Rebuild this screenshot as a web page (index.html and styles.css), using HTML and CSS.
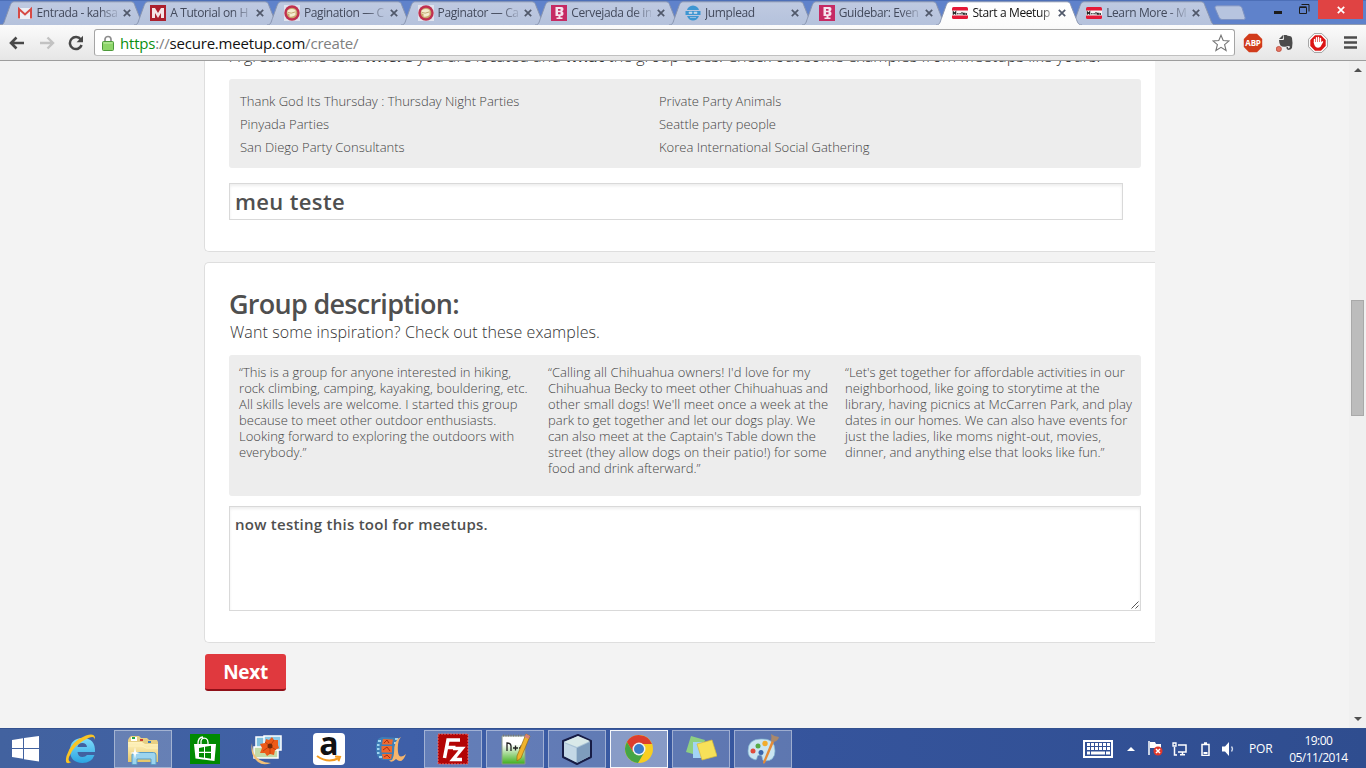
FILE: index.html
```
<!DOCTYPE html>
<html lang="en">
<head>
<meta charset="utf-8">
<title>Start a Meetup</title>
<link rel="stylesheet" href="styles.css">
</head>
<body>
<svg class="defs" width="0" height="0">
  <defs>
    <linearGradient id="tabfill" x1="0" y1="0" x2="0" y2="1"><stop offset="0" stop-color="#bfcae1"/><stop offset="1" stop-color="#b5c2dc"/></linearGradient>
    <linearGradient id="activefill" x1="0" y1="0" x2="0" y2="1"><stop offset="0" stop-color="#ffffff"/><stop offset="1" stop-color="#fbfbfb"/></linearGradient>
    <linearGradient id="folder" x1="0" y1="0" x2="0" y2="1"><stop offset="0" stop-color="#fff3bf"/><stop offset="1" stop-color="#e6c568"/></linearGradient>
    <linearGradient id="npp" x1="0" y1="0" x2="0" y2="1"><stop offset=".3" stop-color="#ffffff"/><stop offset="1" stop-color="#3fae1c"/></linearGradient>
    <linearGradient id="ie" x1="0" y1="0" x2="0" y2="1"><stop offset="0" stop-color="#7fdcfb"/><stop offset="1" stop-color="#2ba5e2"/></linearGradient>
    <symbol id="tab" viewBox="0 0 146 25" preserveAspectRatio="none"><path d="M0 25C4 25 4 22 5.500 18L10 5C11.500 1.500 12 .8 15 .8H130C133 .8 134 1.500 135 5L140 18C141.500 22 142 25 146 25" stroke="#8793ae" stroke-width="1"/></symbol>
    <symbol id="close" viewBox="0 0 8 8"><path d="M.8.8l6.400 6.400M7.200.8L.8 7.200" stroke="#50586a" stroke-width="1.700"/></symbol>
    <symbol id="cake" viewBox="0 0 16 16"><path fill="#dfe3ee" d="M0 0h16v16H0z"/><circle cx="8" cy="8" r="7.700" fill="#c0304f"/><circle cx="8" cy="8" r="5.300" fill="#c9a66b"/><path d="M3.500 5.500q4-2.500 8-.5v5q-3 2.500-6 1.500V9l-2-.5z" fill="#f4edcf"/><path d="M4 7.500q3 1.500 7-.5" fill="none" stroke="#b8975a" stroke-width=".8"/></symbol>
    <symbol id="beer" viewBox="0 0 16 16"><path fill="#c62a63" d="M0 0h16v16H0z"/><path d="M4.500 2h6q2 0 2 2t-1.500 2.200q1.500.5 1.500 2.300 0 2.500-2.500 2.500H9.500v1.500h2V14h-6v-1.500h2V11h-3z" fill="#f6e3ee"/><path d="M7 4h2.500v1.700H7zM7 7.300h2.500v2H7z" fill="#c62a63"/></symbol>
    <symbol id="meet" viewBox="0 0 16 12"><rect width="16" height="12" rx="1.500" fill="#e51937"/><path fill="#f5f5f5" d="M0 3.500h16v5H0z"/><path d="M1.300 7.700V4.800l1.200 1.500 1.200-1.500v2.900M5 6.800h1.600M7.300 6.800h1.600M10 5v2.500M11.500 5.800v1.500h1.300V5.800M14.300 8V6" fill="none" stroke="#222" stroke-width="1.100"/></symbol>
  </defs>
</svg>

<header class="tabs">
  <div class="tab"><svg class="shape"><use href="#tab"/></svg><svg class="fav" viewBox="0 0 16 16"><path d="M1 3h14v11H1z" fill="#eceff5"/><path d="M2 13.500V4l6 5.500L14 4v9.500" fill="none" stroke="#d64a45" stroke-width="2"/></svg><span class="title">Entrada - kahsa</span><svg class="x"><use href="#close"/></svg></div>
  <div class="tab"><svg class="shape"><use href="#tab"/></svg><svg class="fav" viewBox="0 0 16 16"><path fill="#ac1f2d" d="M0 0h16v16H0z"/><path d="M2 13V3h3l3 5 3-5h3v10h-3V8l-3 5-3-5v5z" fill="#f4e4e6"/></svg><span class="title">A Tutorial on H</span><svg class="x"><use href="#close"/></svg></div>
  <div class="tab"><svg class="shape"><use href="#tab"/></svg><svg class="fav"><use href="#cake"/></svg><span class="title">Pagination — C</span><svg class="x"><use href="#close"/></svg></div>
  <div class="tab"><svg class="shape"><use href="#tab"/></svg><svg class="fav"><use href="#cake"/></svg><span class="title">Paginator — Ca</span><svg class="x"><use href="#close"/></svg></div>
  <div class="tab"><svg class="shape"><use href="#tab"/></svg><svg class="fav"><use href="#beer"/></svg><span class="title">Cervejada de in</span><svg class="x"><use href="#close"/></svg></div>
  <div class="tab"><svg class="shape"><use href="#tab"/></svg><svg class="fav" viewBox="0 0 16 16"><path d="M2 5q1-4 6-4.500Q13 1 14 5zM.5 6h15v4H.5zM2 11h12q-2 4.500-6 4.500T2 11z" fill="#3d96d2"/><path d="M4 7h3v1.500H4zm5 0h3v1.500H9zM5 12.500h6" fill="#c5d8ea" stroke="#c5d8ea" stroke-width=".6"/></svg><span class="title">Jumplead</span><svg class="x"><use href="#close"/></svg></div>
  <div class="tab"><svg class="shape"><use href="#tab"/></svg><svg class="fav"><use href="#beer"/></svg><span class="title">Guidebar: Even</span><svg class="x"><use href="#close"/></svg></div>
  <div class="tab active"><svg class="shape"><use href="#tab"/></svg><svg class="fav"><use href="#meet"/></svg><span class="title">Start a Meetup</span><svg class="x"><use href="#close"/></svg></div>
  <div class="tab"><svg class="shape"><use href="#tab"/></svg><svg class="fav"><use href="#meet"/></svg><span class="title">Learn More - M</span><svg class="x"><use href="#close"/></svg></div>
  <svg class="newtab" viewBox="0 0 32 16"><path d="M3 .8h22q2 0 3 2l3 9.500q.8 2.200-1.500 2.200H8q-2 0-3-2.200L1 3Q.5.8 3 .8z" fill="#b7c4df" stroke="#7f93c2"/></svg>
  <div class="wincontrols">
    <svg class="min" viewBox="0 0 8 3"><path d="M0 0h8v3H0z" fill="#1c1c1c"/></svg>
    <svg class="restore" viewBox="0 0 11 11"><path d="M.5 3.500h7v6h-7zM.5 2.800h7M2.500 .5h7.500v7" fill="none" stroke="#1c1c1c"/></svg>
    <div class="winclose"><svg viewBox="0 0 8 8"><path d="M.8.8l6.400 6.400M7.200.8L.8 7.200" stroke="#fff" stroke-width="1.700"/></svg></div>
  </div>
</header>

<nav class="toolbar">
  <svg class="back" viewBox="0 0 16 14"><path d="M15 7H3M7.500 1.500L2 7l5.500 5.500" fill="none" stroke="#484848" stroke-width="2.600"/></svg>
  <svg class="fwd" viewBox="0 0 16 14"><path d="M1 7h12M8.500 1.500L14 7l-5.500 5.500" fill="none" stroke="#c2c2c2" stroke-width="2.400"/></svg>
  <svg class="reload" viewBox="0 0 16 16"><path d="M12.800 4.600A6 6 0 1 0 13.600 10" fill="none" stroke="#484848" stroke-width="2.500"/><path d="M15 .8v6.400H8.600z" fill="#484848"/></svg>
  <div class="omnibox">
    <svg class="lock" viewBox="0 0 12 16"><path d="M3 8V4.500a3 3 0 0 1 6 0V8" fill="none" stroke="#8d8d8d" stroke-width="1.700"/><rect x=".5" y="6.500" width="11" height="9" rx="1" fill="#8dd569" stroke="#4d9a3b"/><path d="M1.500 8h9" stroke="#c5f0ae"/></svg>
    <span class="url"><span class="scheme">https</span><span class="dim">://</span>secure.meetup.com<span class="dim">/create/</span></span>
    <svg class="star" viewBox="0 0 18 18"><path d="M9 1.200l2.200 5.300 5.900.4-4.500 3.800 1.500 5.800L9 13.300l-5.100 3.200 1.500-5.800L.9 6.900l5.900-.4z" fill="#fff" stroke="#757575" stroke-width="1.100"/></svg>
  </div>
  <div class="exts">
    <div class="abp"><svg viewBox="0 0 20 20"><path d="M6 .8h8L19.200 6v8L14 19.200H6L.8 14V6z" fill="#d13b1b"/></svg><span>ABP</span></div>
    <svg class="evernote" viewBox="0 0 18 18"><path d="M3 5l4-4v3q0 1-1 1zM7.500 1h3q1 1 3 1t2.500 2q1 5 0 10-1 2-4 2-2-1-1.500-3h1.500v1.500q2 0 2-2-2-1-3.500 0-4 1-6-1Q3 9 3 6h4q1 0 1-1z" fill="#4b4b4b"/><circle cx="2.800" cy="15" r="2.600" fill="#e67563" stroke="#b3402f" stroke-width=".7"/></svg>
    <svg class="adblock" viewBox="0 0 20 20"><path d="M6.200.6h7.600l5.600 5.600v7.600l-5.600 5.600H6.200L.6 13.800V6.200z" fill="#fff" stroke="#888" stroke-width=".8"/><path d="M7 2.300h6L17.700 7v6L13 17.700H7L2.300 13V7z" fill="#dc1414"/><path d="M6.500 10V6.500M8.500 9V4.700M10.500 9V4.500M12.500 9.500V5.500" stroke="#fff" stroke-width="1.400" stroke-linecap="round"/><path d="M5.800 9h7.400l1.300-1 .8.800-2.800 5q-2.500 2-5 0Q6 12 5.800 9z" fill="#fff"/></svg>
    <svg class="menu" viewBox="0 0 13 13"><path d="M0 1.500h13M0 6.500h13M0 11.500h13" stroke="#4c4c4c" stroke-width="2.600"/></svg>
  </div>
</nav>

<div class="viewport">
  <main class="page">
    <section class="card first">
      <p class="intro">A great name tells <b>where</b> you are located and <b>what</b> the group does. Check out some examples from Meetups like yours.</p>
      <ul class="names">
        <li>Thank God Its Thursday : Thursday Night Parties</li><li>Private Party Animals</li>
        <li>Pinyada Parties</li><li>Seattle party people</li>
        <li>San Diego Party Consultants</li><li>Korea International Social Gathering</li>
      </ul>
      <div class="field name">meu teste</div>
    </section>
    <section class="card second">
      <h2>Group description:</h2>
      <p class="sub">Want some inspiration? Check out these examples.</p>
      <div class="quotes">
        <p>“This is a group for anyone interested in hiking,<br><span class="wide">rock climbing, camping, kayaking, bouldering, etc.</span><br><span class="wide">All skills levels are welcome. I started this group</span><br>because to meet other outdoor enthusiasts.<br>Looking forward to exploring the outdoors with<br>everybody.”</p>
        <p><span class="wide">“Calling all Chihuahua owners! I'd love for my</span><br><span class="tight">Chihuahua Becky to meet other Chihuahuas and</span><br><span class="wide">other small dogs! We'll meet once a week at the</span><br>park to get together and let our dogs play. We<br>can also meet at the Captain's Table down the<br><span class="wide">street (they allow dogs on their patio!) for some</span><br>food and drink afterward.”</p>
        <p>“Let's get together for affordable activities in our<br>neighborhood, like going to storytime at the<br><span class="wide">library, having picnics at McCarren Park, and play</span><br>dates in our homes. We can also have events for<br><span class="wide">just the ladies, like moms night-out, movies,</span><br>dinner, and anything else that looks like fun.”</p>
      </div>
      <div class="field desc">now testing this tool for meetups.<svg class="grip" viewBox="0 0 8 8"><path d="M.5 7.500l7-7M4.500 7.500l3-3" stroke="#555" stroke-width="1"/></svg></div>
    </section>
    <div class="next">Next</div>
  </main>
  <aside class="scrollbar">
    <svg viewBox="0 0 8 4"><path d="M4 0l4 4H0z" fill="#505050"/></svg>
    <div class="thumb"></div>
    <svg viewBox="0 0 8 4"><path d="M4 4l4-4H0z" fill="#505050"/></svg>
  </aside>
</div>

<footer class="taskbar">
  <div class="start"><svg width="27" height="26" viewBox="0 0 27 26"><path d="M0 4l11-1.800V12H0zM12 2l15-2v12H12zM0 13h11v9.800L0 21zM12 13h15v12.500L12 23.300z" fill="#fff"/></svg></div>
  <div class="app"><svg width="32" height="32" viewBox="0 0 32 32"><path d="M30 19H12.500q.5 5 5 5 3 0 4.500-2h7.500q-3 8-12 8Q5 29.500 5 17.500T17.500 5Q30.500 5 30 19zm-8-5q-.5-4-4.700-4t-4.800 4z" fill="url(#ie)" fill-rule="evenodd"/><path d="M6.500 29Q-1 33 1.500 23 6 8 21 2.500q8-3 9 2L29.500 8q1-6-6-3Q9 11 4 24q-1.500 5.500 2.500 5z" fill="#f9c425"/></svg></div>
  <div class="app open"><svg width="34" height="32" viewBox="0 0 34 32"><path d="M3 5l2-2h8l2 2h6l2 2h8l1 2v19H2V7z" fill="#e7cf83"/><path d="M5 4h6v4H5z" fill="#fff"/><path d="M6 4h3v2H6z" fill="#24a343"/><path d="M14 6h3v2h-3z" fill="#cf3c30"/><path d="M22 8h3v2h-3z" fill="#3677bd"/><path d="M2 9h14l3 2h13v18H2z" fill="url(#folder)"/><path d="M2 13h14l4 2h12" fill="none" stroke="#fff3bd"/><path d="M6 31.500V22q0-2.500 2.500-2.500h19Q30 19.500 30 22v9.500h-5V26H11v5.500z" fill="#9cd4ee" stroke="#5b9dc5"/><path d="M9 14l1 5 4 1-4 1-1 5-1-5-4-1 4-1z" fill="#fff"/></svg></div>
  <div class="app"><svg width="30" height="30" viewBox="0 0 30 30"><path fill="#008a00" d="M0 0h30v30H0z"/><path d="M11 10V7q1-4 5-2.500 2 1 2 4V10M8 10q0-7 5-7" fill="none" stroke="#fff" stroke-width="1.300"/><path d="M4 10h22l-1.500 17-19-2.500z" fill="#fff"/><path d="M9 14l5-1v4.800H9zm6-1.200l6-1v6h-6zM9 19h5v4.700L9 23zm6 0h6v5.800l-6-1z" fill="#008a00"/></svg></div>
  <div class="app"><svg width="32" height="32" viewBox="0 0 32 32"><path d="M5 4h17v20H5z" fill="#7fc1df" stroke="#fff" stroke-width="1.500"/><path d="M3 14h24v11H3z" fill="#c3dba9" stroke="#fff" stroke-width="1.500"/><path d="M13 3h17v14H13z" fill="#8bc9e6" stroke="#fff" stroke-width="1.500"/><path d="M15 6l3 1 3-3 2 3 4 0v5l1 3-4 2-1 5-4-1-3 2-2-3-5 0 2-5-2-4 5-1z" fill="#ec5b19"/><path d="M14 9l5 4 4-6M12 18l7-5 6 4m-6-4v8" stroke="#c43f0e" fill="none"/><circle cx="19" cy="13" r="2.500" fill="#712a0c"/><path d="M1 10q0 19 19 20-10 4-16-4Q-1 19 1 10z" fill="#f2c078"/></svg></div>
  <div class="app"><div class="amazon"><span>a</span><svg width="28" height="8" viewBox="0 0 28 8"><path d="M2 1q11 8 22 2M20 1.500l5 .3-1.500 4.500" fill="none" stroke="#f39a1f" stroke-width="2"/></svg></div></div>
  <div class="app"><svg width="32" height="28" viewBox="0 0 32 28"><path d="M2 6q1-3 5-4l17 1-3 5v10q-1 5-4 7H8q-5-1-6-5-2-7 0-14z" fill="#3f7fb7"/><path d="M8 4l10 .5-1 5H7zM6.500 11H17v6.500H6.500zM7 19h10l-1 5H8z" fill="#f0692d"/><path d="M9 8l3-3 2 3M8 15l4-3 3 4M9 22l3-2 3 3" stroke="#a72c10" fill="none"/><path d="M3 6h3M2 10h2.500M2 14h2.500M2 18h2.500M4 22h3M20 4h3M19 8h2" stroke="#9fd4f0" stroke-width="1.800"/><path d="M21 24q-5 5-7 1 4 2 5-7Q19 4 26 2q-4 4-3 15 1 8 8 2-4 11-10 5z" fill="#f5b56d"/></svg></div>
  <div class="app open"><svg width="32" height="32" viewBox="0 0 32 32"><path d="M1 1h30v30H1z" fill="#b30505" stroke="#e17373" stroke-dasharray="2 1"/><path d="M7.500 25L11 7h12M9.500 14.500h9M16 15.500h9l-9 11h9" fill="none" stroke="#fff" stroke-width="3.500"/></svg></div>
  <div class="app open"><svg width="32" height="32" viewBox="0 0 32 32"><path d="M3 3h23v28H3z" fill="url(#npp)" stroke="#8a9a8a"/><path d="M4 2.500h20" stroke="#777" stroke-width="2" stroke-dasharray="1 1.500"/><path d="M8 18V10q4 0 4 3v5M14 15h5m-2.500-2.500v5M20 15h4m-2-2.500v5" fill="none" stroke="#222" stroke-width="1.300"/><path d="M27 1l4 2-9 22-4 3v-5z" fill="#efb42c" stroke="#9b6a10" stroke-width=".7"/><path d="M27 1l4 2-1.500 3-4-2z" fill="#d98078"/></svg></div>
  <div class="app open"><svg width="32" height="32" viewBox="0 0 32 32"><path d="M2 8L17 2l13 6v16l-14 7L2 24z" fill="#a9c3d6" stroke="#171c45" stroke-width="2" stroke-linejoin="round"/><path d="M3 9l14-6 12 5-13 6z" fill="#d9e9e9"/><path d="M3 10l12 5v14L3 23z" fill="#c4d8e6"/><path d="M16 15l13-6v14l-13 7z" fill="#7e9dbd"/></svg></div>
  <div class="app open current"><svg width="30" height="30" viewBox="0 0 30 30"><circle cx="15" cy="15" r="14" fill="#f8ce21"/><path d="M2.900 8A14 14 0 0 1 28 10H15L9 18z" fill="#dc3d2d"/><path d="M2.900 8A14 14 0 0 0 14 29L20.500 18 9 18z" fill="#45a545"/><circle cx="15" cy="15" r="6.500" fill="#f0f3f5"/><circle cx="15" cy="15" r="5" fill="#3b7cc9"/></svg></div>
  <div class="app open"><svg width="32" height="30" viewBox="0 0 32 30"><path d="M6 2l14 4-5 16L1 18z" fill="#8ed082"/><path d="M8 8h13v16H8z" fill="#a3d4f5"/><path d="M12 10l15-4 5 16-15 4z" fill="#f7e159" stroke="#d6b83b" stroke-width=".7"/></svg></div>
  <div class="app open"><svg width="32" height="32" viewBox="0 0 32 32"><path d="M1 18Q1 6 14 6q14-1 14 12 0 10-10 10-3 0-3-4 0-2-2-2-3 0-3 3t-4 1Q1 24 1 18z" fill="#cbe5f1" stroke="#7fb3d0" stroke-width=".7"/><circle cx="6" cy="18" r="2.500" fill="#e04b3b"/><circle cx="11" cy="13" r="2.500" fill="#55aa45"/><circle cx="18" cy="10.500" r="2.700" fill="#f2ac2c"/><circle cx="14" cy="19.500" r="2.500" fill="#3b66ac"/><path d="M25 7l2 2-9 21q-2 2-2-1z" fill="#e58b36"/><path d="M24 1q4 3 8 3-1 4-5 5l-3-1q1-4 0-7z" fill="#a9886b"/></svg></div>
  <div class="tray">
    <svg class="kbd" viewBox="0 0 30 18"><rect x="1" y="1" width="28" height="16" fill="none" stroke="#fff" stroke-width="2"/><path d="M4 4.500h23M4 8.500h23" stroke="#fff" stroke-width="3" stroke-dasharray="3 1"/><path d="M4 13h3m1 0h14m1 0h4" stroke="#fff" stroke-width="3"/></svg>
    <svg class="up" viewBox="0 0 8 4"><path d="M4 0l4 4H0z" fill="#fff"/></svg>
    <svg class="flag" viewBox="0 0 16 15"><path d="M2 0v14" stroke="#fff" stroke-width="1.500"/><path d="M3 1h5l1 2h5v6H9L8 7H3z" fill="#fff"/><circle cx="11" cy="10" r="4.500" fill="#e2382a"/><path d="M9 8l4 4m0-4l-4 4" stroke="#fff" stroke-width="1.500"/></svg>
    <svg class="net" viewBox="0 0 15 14"><path d="M6 3h8v7H6M8 12.800h5M10.500 10v3M2.500 5v8H5" fill="none" stroke="#fff" stroke-width="1.500"/><path d="M1 1h3v3H1z" fill="none" stroke="#fff" stroke-width="1.300"/></svg>
    <svg class="bat" viewBox="0 0 9 14"><path d="M1 2.500h7v11H1zM3 1h3" fill="none" stroke="#fff" stroke-width="1.500"/><path d="M2.500 10h4v2h-4z" fill="#fff"/></svg>
    <svg class="vol" viewBox="0 0 13 14"><path d="M0 4.500h3L7 0v14L3 9.500H0z" fill="#fff"/><path d="M9.500 4.500q2 2.500 0 5" fill="none" stroke="#cfd8ea" stroke-width="1.300"/></svg>
    <span class="lang">POR</span>
    <div class="clock"><span>19:00</span><span>05/11/2014</span></div>
  </div>
</footer>
</body>
</html>
```

FILE: styles.css
```
* { box-sizing: border-box; }
body { margin: 0; width: 1366px; height: 768px; overflow: hidden; display: flex; flex-direction: column; background: #f3f3f3; font-family: "Open Sans", "Noto Sans", sans-serif; color: #4f4f4f; }
.defs { position: absolute; }
svg { display: block; flex: none; }
p, h2, ul { margin: 0; padding: 0; }

.tabs { height: 24px; display: flex; background: #5f82cb; border-top: 1px solid #4d6fb7; flex: none; position: relative; z-index: 2; }
.tab { width: 146px; height: 24px; margin-right: -12.3px; padding: 0 15px 0 16.500px; display: flex; align-items: center; flex: none; position: relative; font-size: 12px; color: #434a5c; }
.tab .shape { position: absolute; left: 0; top: 0; width: 146px; height: 24px; fill: url(#tabfill); }
.tab.active { z-index: 1; color: #111; }
.tab.active .shape { fill: url(#activefill); }
.fav { width: 16px; height: 16px; position: relative; }
.title { position: relative; margin-left: 4px; width: 80px; height: 17px; line-height: 16px; white-space: nowrap; overflow: hidden; letter-spacing: -.38px; mask-image: linear-gradient(90deg, #000 78%, rgba(0, 0, 0, .2) 100%); }
.tab.active .title { mask-image: linear-gradient(90deg, #000 85%, rgba(0, 0, 0, .3) 100%); }
.x { width: 8px; height: 8px; margin-left: 6px; position: relative; }
.newtab { width: 32px; height: 16px; margin: 4px 0 0 11px; }
.wincontrols { margin-left: auto; margin-right: 3px; display: flex; }
.min { width: 8px; height: 3px; margin: 10px 17px 0 0; }
.restore { width: 11px; height: 11px; margin: 3px 8px 0 0; }
.winclose { width: 45px; height: 19px; margin-top: -1px; background: #e04343; display: flex; align-items: center; justify-content: center; }
.winclose svg { width: 8px; height: 8px; }

.toolbar { height: 37px; flex: none; display: flex; align-items: center; background: linear-gradient(#fbfbfb, #e6e6e6); border-bottom: 1px solid #9d9d9d; border-top: 1px solid #8f9bb2; padding-left: 9px; }
.back { width: 16px; height: 14px; }
.fwd { width: 16px; height: 14px; margin-left: 14px; }
.reload { width: 16px; height: 16px; margin-left: 13px; }
.omnibox { margin-left: 10px; width: 1141px; height: 27px; background: #fff; border: 1px solid #a5a5a5; border-bottom-color: #c0c0c0; border-radius: 3px; display: flex; align-items: center; padding: 0 4px 0 7px; }
.lock { width: 12px; height: 16px; }
.url { margin-left: 6px; font-size: 15px; letter-spacing: -.2px; color: #111; white-space: nowrap; flex: none; }
.scheme { color: #0a8f10; }
.dim { color: #808080; }
.star { width: 18px; height: 18px; margin-left: auto; }
.exts { display: flex; align-items: center; }
.abp { width: 20px; height: 20px; margin-left: 8px; position: relative; display: flex; align-items: center; justify-content: center; }
.abp svg { position: absolute; width: 20px; height: 20px; }
.abp span { position: relative; color: #fff; font: bold 8px "Open Sans", sans-serif; letter-spacing: -.2px; }
.evernote { width: 18px; height: 18px; margin-left: 13px; }
.adblock { width: 20px; height: 20px; margin-left: 14px; }
.menu { width: 13px; height: 13px; margin-left: 16px; }

.viewport { flex: 1; display: flex; overflow: hidden; }
.page { flex: 1; padding-left: 204px; overflow: hidden; display: flex; flex-direction: column; align-items: flex-start; }
.card { width: 951px; background: #fff; border: 1px solid #dedede; border-right: 0; border-radius: 5px 0 0 5px; padding-left: 24px; flex: none; }
.first { height: 207px; margin-top: -16px; }
.intro { font-size: 16px; line-height: 20px; font-weight: 330; letter-spacing: .06px; white-space: nowrap; color: #333; padding-left: 1px; }
.intro b { font-weight: 600; }
.names { list-style: none; width: 912px; height: 89px; margin-top: 13px; padding: 11px 0 0 11px; background: #ededed; border-radius: 3px; display: grid; grid-template-columns: 419px 1fr; grid-auto-rows: 23px; font-size: 13px; line-height: 23px; font-weight: 330; color: #444; }
.field { border: 1px solid #d9d9d9; background: #fff; box-shadow: inset 0 2px 3px rgba(0, 0, 0, .07); padding-left: 5px; font-weight: 600; }
.name { width: 894px; height: 37px; margin-top: 15px; font-size: 22px; line-height: 35px; letter-spacing: .35px; }
.second { height: 381px; margin-top: 10px; padding-top: 23px; }
h2 { font-size: 27px; line-height: 36px; font-weight: 600; letter-spacing: -.72px; }
.sub { font-size: 16px; line-height: 20px; font-weight: 330; letter-spacing: .1px; color: #333; padding-left: 1px; }
.quotes { width: 912px; height: 141px; margin-top: 13px; padding: 9px 0 0 10px; background: #ededed; border-radius: 3px; display: grid; grid-template-columns: 309px 297px 1fr; font-size: 13px; line-height: 16px; font-weight: 330; white-space: nowrap; color: #444; }
.wide { letter-spacing: .07px; }
.tight { letter-spacing: -.06px; }
.desc { width: 912px; height: 105px; margin-top: 10px; padding-top: 7px; font-size: 15px; line-height: 20px; letter-spacing: .25px; position: relative; }
.grip { position: absolute; right: 1px; bottom: 1px; width: 8px; height: 8px; }
.next { margin: 11px 0 0 1px; width: 81px; height: 37px; background: #e0393e; border-bottom: 2px solid #8f1018; border-radius: 3px; color: #fff; font-size: 19px; font-weight: 700; line-height: 36px; text-align: center; letter-spacing: -.3px; }
.scrollbar { width: 17px; background: #f0f0f0; display: flex; flex-direction: column; align-items: center; padding: 7px 0; }
.scrollbar svg { width: 8px; height: 4px; }
.thumb { width: 13px; height: 116px; margin: 228px 0 auto 0; background: #bcbcbc; border: 1px solid #a9a9a9; }

.taskbar { height: 40px; flex: none; display: flex; align-items: center; gap: 4px; background: linear-gradient(90deg, #42629f, #3e5fa8 30%, #35549c 60%, #2f4d8f); border-top: 1px solid #33518f; color: #fff; }
.start { width: 48px; padding-left: 12px; }
.app { width: 58px; height: 38px; display: flex; align-items: center; justify-content: center; flex: none; }
.open { background: rgba(255, 255, 255, .2); border: 1px solid rgba(255, 255, 255, .4); }
.current { background: rgba(255, 255, 255, .4); border: 1px solid #f4f6fa; }
.amazon { width: 32px; height: 32px; background: #fff; border-radius: 4px; display: flex; flex-direction: column; align-items: center; color: #111; }
.amazon span { font: bold 32px/20px "Open Sans", sans-serif; height: 22px; }
.tray { flex: 1; display: flex; align-items: center; height: 40px; }
.kbd { width: 30px; height: 18px; margin-left: 287px; }
.up { width: 8px; height: 4px; margin-left: 14px; }
.flag { width: 16px; height: 15px; margin-left: 12px; }
.net { width: 15px; height: 14px; margin-left: 9px; }
.bat { width: 9px; height: 14px; margin-left: 14px; }
.vol { width: 13px; height: 14px; margin-left: 12px; }
.lang { font-size: 12px; letter-spacing: -.2px; margin-left: 14px; }
.clock { width: 60px; margin-left: 16px; display: flex; flex-direction: column; align-items: center; font-size: 12px; line-height: 17px; letter-spacing: -.55px; }
```
